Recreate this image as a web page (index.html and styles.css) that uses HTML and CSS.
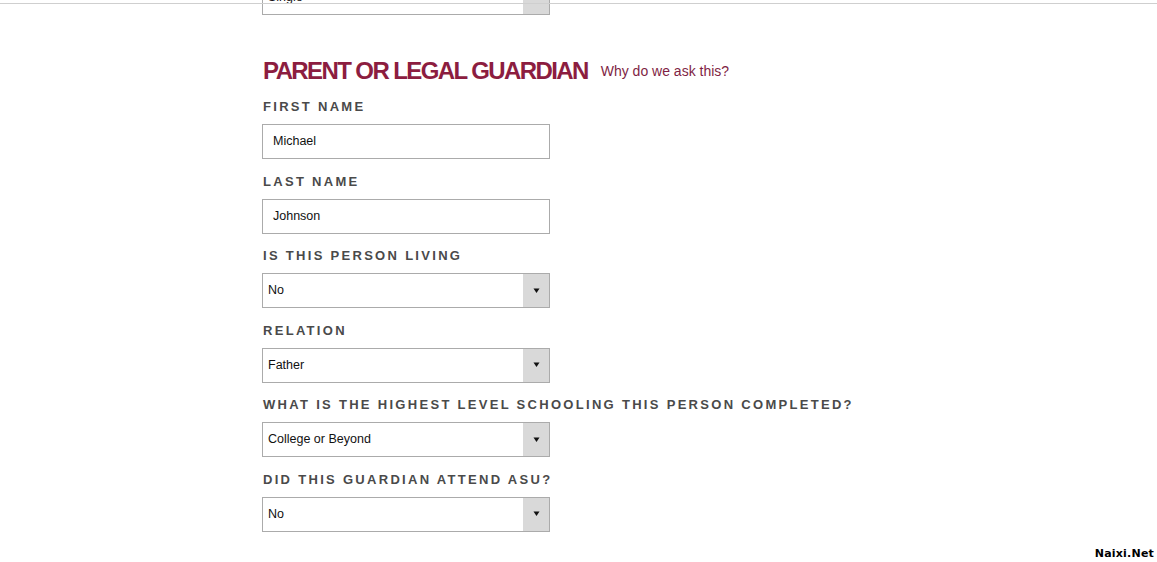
FILE: index.html
```html
<!DOCTYPE html>
<html lang="en">
<head>
<meta charset="utf-8">
<title>Parent or Legal Guardian</title>
<link rel="stylesheet" href="styles.css">
</head>
<body>
<div class="topline"></div>
<main class="form">
  <div class="select select-prev">
    <span class="select-value">Single</span>
    <span class="select-arrow"><svg width="7" height="6" viewBox="0 0 7 6"><path d="M0.5 0.5h6L3.5 5z" fill="#111"/></svg></span>
  </div>

  <div class="section-head">
    <h2 class="section-title">PARENT OR LEGAL GUARDIAN</h2>
    <a class="why" href="#">Why do we ask this?</a>
  </div>

  <div class="field">
    <label class="label">FIRST NAME</label>
    <div class="input">Michael</div>
  </div>
  <div class="field">
    <label class="label">LAST NAME</label>
    <div class="input">Johnson</div>
  </div>
  <div class="field">
    <label class="label">IS THIS PERSON LIVING</label>
    <div class="select">
      <span class="select-value">No</span>
      <span class="select-arrow"><svg width="7" height="6" viewBox="0 0 7 6"><path d="M0.5 0.5h6L3.5 5z" fill="#111"/></svg></span>
    </div>
  </div>
  <div class="field">
    <label class="label">RELATION</label>
    <div class="select">
      <span class="select-value">Father</span>
      <span class="select-arrow"><svg width="7" height="6" viewBox="0 0 7 6"><path d="M0.5 0.5h6L3.5 5z" fill="#111"/></svg></span>
    </div>
  </div>
  <div class="field">
    <label class="label">WHAT IS THE HIGHEST LEVEL SCHOOLING THIS PERSON COMPLETED?</label>
    <div class="select">
      <span class="select-value">College or Beyond</span>
      <span class="select-arrow"><svg width="7" height="6" viewBox="0 0 7 6"><path d="M0.5 0.5h6L3.5 5z" fill="#111"/></svg></span>
    </div>
  </div>
  <div class="field">
    <label class="label">DID THIS GUARDIAN ATTEND ASU?</label>
    <div class="select">
      <span class="select-value">No</span>
      <span class="select-arrow"><svg width="7" height="6" viewBox="0 0 7 6"><path d="M0.5 0.5h6L3.5 5z" fill="#111"/></svg></span>
    </div>
  </div>
</main>
<div class="watermark">Naixi.Net</div>
</body>
</html>
```

FILE: styles.css
```css
html, body {
  margin: 0;
  padding: 0;
  background: #fff;
}
body {
  font-family: "Liberation Sans", Arial, sans-serif;
  width: 1157px;
  height: 562px;
  overflow: hidden;
  position: relative;
}
.topline {
  position: absolute;
  left: 0;
  top: 3px;
  width: 100%;
  height: 1px;
  background: #cfcfcf;
  z-index: 2;
}
.form {
  padding-left: 262px;
  display: flex;
  flex-direction: column;
  align-items: flex-start;
}
.select-prev {
  margin-top: -20px;
  margin-bottom: 44px;
}
.section-head {
  display: flex;
  align-items: center;
  gap: 13px;
  margin-left: 1px;
  margin-bottom: 16px;
}
.section-title {
  margin: 0;
  font-size: 24px;
  line-height: 24px;
  font-weight: bold;
  letter-spacing: -1.6px;
  color: #8c1d40;
}
.why {
  font-size: 14px;
  line-height: 16px;
  color: #7f1f45;
  text-decoration: none;
}
.field {
  display: flex;
  flex-direction: column;
  align-items: flex-start;
  margin-bottom: 14.6px;
}
.label {
  display: block;
  margin-left: 1px;
  font-size: 13px;
  line-height: 16px;
  font-weight: bold;
  letter-spacing: 2.3px;
  color: #4a4a4a;
  margin-bottom: 9px;
  white-space: nowrap;
}
.input {
  box-sizing: border-box;
  width: 288px;
  height: 35px;
  border: 1px solid #ababab;
  padding: 0 10px;
  font-size: 12.5px;
  line-height: 33px;
  color: #111;
}
.select {
  box-sizing: border-box;
  width: 288px;
  height: 35px;
  border: 1px solid #ababab;
  display: flex;
  align-items: stretch;
  font-size: 12.5px;
  color: #111;
}
.select-value {
  flex: 1;
  padding-left: 5px;
  line-height: 33px;
}
.select-arrow {
  width: 26px;
  background: #d9d9d9;
  display: flex;
  align-items: center;
  justify-content: center;
}
.watermark {
  position: absolute;
  right: 3px;
  bottom: 2px;
  font-family: "DejaVu Sans", Verdana, sans-serif;
  font-weight: bold;
  font-size: 11px;
  letter-spacing: 0.2px;
  color: #000;
}
```
